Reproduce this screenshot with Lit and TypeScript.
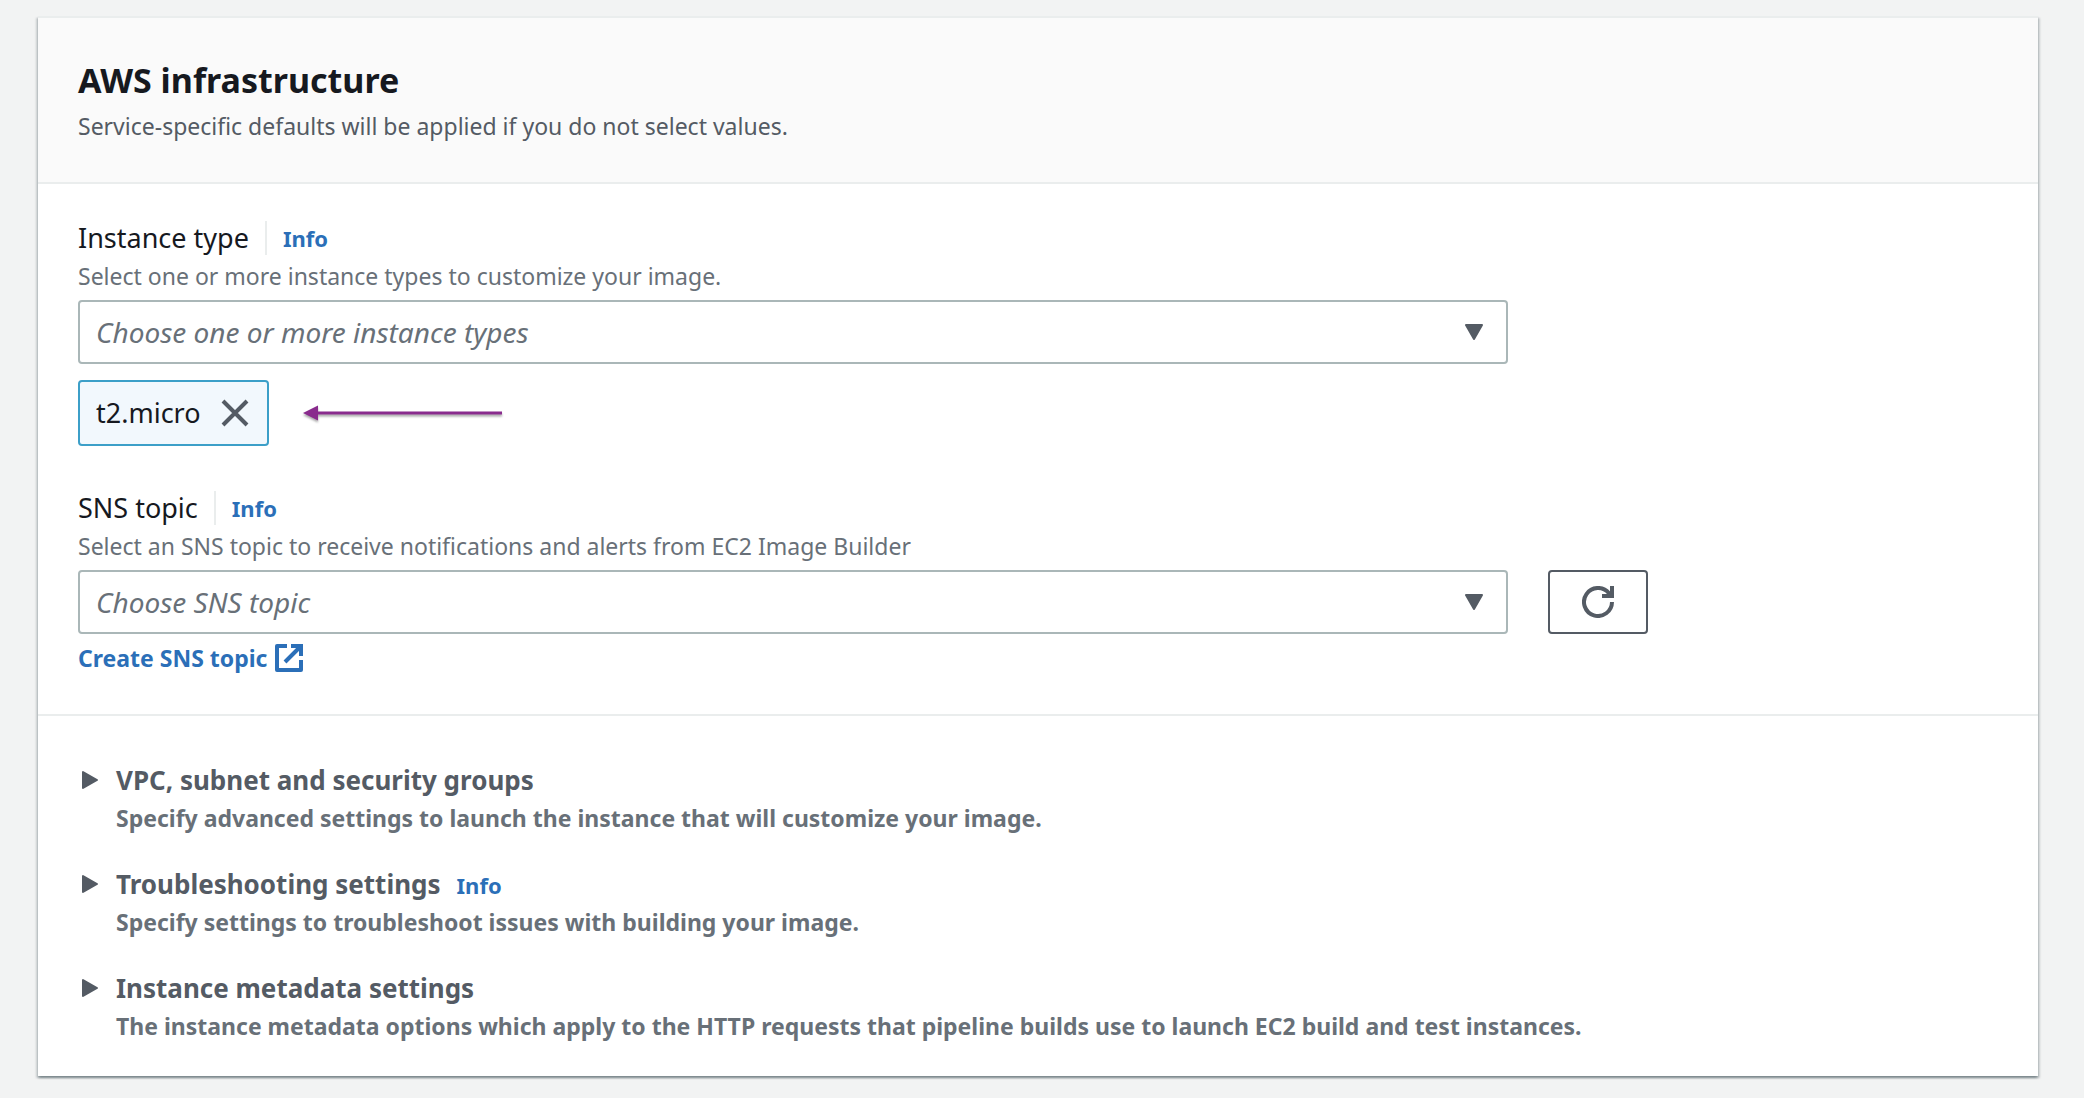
import { LitElement, html, css, svg, nothing } from "lit";
import { customElement, property, state } from "lit/decorators.js";

interface Section {
  title: string;
  description: string;
  info?: boolean;
}

const SECTIONS: Section[] = [
  {
    title: "VPC, subnet and security groups",
    description: "Specify advanced settings to launch the instance that will customize your image.",
  },
  {
    title: "Troubleshooting settings",
    description: "Specify settings to troubleshoot issues with building your image.",
    info: true,
  },
  {
    title: "Instance metadata settings",
    description:
      "The instance metadata options which apply to the HTTP requests that pipeline builds use to launch EC2 build and test instances.",
  },
];

const caretDown = svg`<path d="M2 1h16L10 15z" fill="currentColor" stroke="currentColor" stroke-width="2" stroke-linejoin="round"/>`;
const closeLines = svg`<path d="M2 2l24 24M26 2L2 26"/>`;
const refreshLines = svg`<path d="M30 16a14 14 0 1 1-3-8.700l1 1.700"/><path d="M20 10h10V0"/>`;

@customElement("form-select")
export class FormSelect extends LitElement {
  @property() label = "";
  @property() hint = "";
  @property() placeholder = "";

  static styles = css`
    :host { display: block; min-width: 0; }
    .heading { display: flex; align-items: center; height: 36px; }
    .label { font-size: 27px; line-height: 36px; color: #16191f; }
    .info {
      margin-left: 16px; padding-left: 16px; border-left: 2px solid #eaeded;
      font-size: 22px; line-height: 34px; font-weight: 700; color: #2b6fb8; text-decoration: none;
    }
    .hint { margin: 0 0 4px; font-size: 23px; line-height: 40px; color: #687078; }
    .control { display: grid; align-items: center; }
    .select, .caret { grid-area: 1 / 1; }
    .select {
      appearance: none; box-sizing: border-box; width: 100%; height: 64px; margin: 0;
      padding: 0 60px 0 16px; border: 2px solid #aab7b8; border-radius: 4px; background: #fff;
      font-family: inherit; font-size: 28px; font-style: italic; color: #687078;
    }
    .caret { justify-self: end; margin-right: 24px; width: 20px; height: 16px; color: #545b64; pointer-events: none; }
  `;

  render() {
    return html`
      <div class="heading">
        <label class="label" for="control">${this.label}</label>
        <a class="info" href="#info">Info</a>
      </div>
      <p class="hint" id="hint">${this.hint}</p>
      <div class="control">
        <select class="select" id="control" aria-describedby="hint">
          <option>${this.placeholder}</option>
        </select>
        <svg class="caret" viewBox="0 0 20 16" aria-hidden="true">${caretDown}</svg>
      </div>
    `;
  }
}

@customElement("app-root")
export class AppRoot extends LitElement {
  @state() private types = ["t2.micro"];

  static styles = css`
    :host {
      display: block; box-sizing: border-box; min-height: 100vh; padding: 16px 46px 22px 38px;
      background: #f2f3f3; color: #16191f; font-family: "Noto Sans", "Open Sans", sans-serif;
    }
    .card {
      border-top: 2px solid #eaeded; background: #fff;
      box-shadow: 0 2px 2px rgba(0, 28, 36, 0.3), 2px 2px 2px rgba(0, 28, 36, 0.15), -2px 2px 2px rgba(0, 28, 36, 0.15);
    }
    .header { padding: 40px 40px 36px; border-bottom: 2px solid #eaeded; background: #fafafa; }
    .title { margin: 0 0 4px; font-size: 34px; line-height: 44px; font-weight: 700; }
    .subtitle { margin: 0; font-size: 23px; line-height: 40px; color: #545b64; }
    .fields { display: flex; flex-direction: column; gap: 44px; padding: 36px 40px; border-bottom: 2px solid #eaeded; }
    .row { display: grid; grid-template-columns: calc(75% - 10px) auto; justify-content: start; align-items: end; column-gap: 40px; }
    .tokens { display: flex; align-items: center; gap: 34px; margin-top: 16px; }
    .token {
      display: flex; align-items: center; gap: 20px; box-sizing: border-box; height: 66px; padding: 0 18px 0 16px;
      border: 2px solid #3c9fc8; border-radius: 4px; background: #f2f8fd; font-size: 27px; line-height: 36px;
    }
    .remove { display: flex; padding: 0; border: 0; background: none; color: #545b64; cursor: pointer; }
    .icon { display: block; fill: none; stroke: currentColor; stroke-width: 4; }
    .close { width: 28px; height: 28px; }
    .arrow { display: block; width: 200px; height: 24px; color: #892b8d; filter: drop-shadow(0 2px 1px rgba(0, 0, 0, 0.35)); }
    .refresh {
      display: flex; align-items: center; justify-content: center; box-sizing: border-box; width: 100px; height: 64px;
      padding: 0; border: 2px solid #545b64; border-radius: 4px; background: #fff; color: #545b64; cursor: pointer;
    }
    .reload { width: 32px; height: 32px; }
    .create {
      display: inline-flex; align-items: center; gap: 8px; margin-top: 4px;
      font-size: 23px; line-height: 40px; font-weight: 700; color: #2b6fb8; text-decoration: none;
    }
    .external { width: 28px; height: 28px; }
    .sections { display: flex; flex-direction: column; gap: 28px; padding: 46px 40px 30px; }
    .summary { display: grid; grid-template-columns: 38px 1fr; list-style: none; font-weight: 700; cursor: pointer; }
    .marker { align-self: center; margin-left: 4px; width: 16px; height: 20px; color: #545b64; }
    .section[open] .marker { transform: rotate(90deg); }
    .line { display: flex; align-items: baseline; gap: 16px; height: 36px; }
    .name { margin: 0; font-size: 26px; line-height: 36px; font-weight: 700; color: #545b64; }
    .info { font-size: 22px; line-height: 36px; color: #2b6fb8; text-decoration: none; }
    .detail { grid-column: 2; font-size: 23px; line-height: 40px; color: #687078; }
  `;

  private remove(type: string) {
    this.types = this.types.filter((t) => t !== type);
  }

  render() {
    return html`
      <section class="card">
        <header class="header">
          <h1 class="title">AWS infrastructure</h1>
          <p class="subtitle">Service-specific defaults will be applied if you do not select values.</p>
        </header>
        <div class="fields">
          <div>
            <div class="row">
              <form-select
                label="Instance type"
                hint="Select one or more instance types to customize your image."
                placeholder="Choose one or more instance types"
              ></form-select>
            </div>
            <div class="tokens">
              ${this.types.map(
                (type) => html`
                  <span class="token">
                    ${type}
                    <button class="remove" type="button" aria-label="Remove ${type}" @click=${() => this.remove(type)}>
                      <svg class="icon close" viewBox="0 0 28 28" aria-hidden="true">${closeLines}</svg>
                    </button>
                  </span>
                `,
              )}
              <svg class="arrow" viewBox="0 0 200 24" aria-hidden="true">
                <path d="M0 12L15 4.500v15z" fill="currentColor" />
                <path d="M14 10.500h185v3H14z" fill="currentColor" />
              </svg>
            </div>
          </div>
          <div>
            <div class="row">
              <form-select
                label="SNS topic"
                hint="Select an SNS topic to receive notifications and alerts from EC2 Image Builder"
                placeholder="Choose SNS topic"
              ></form-select>
              <button class="refresh" type="button" aria-label="Refresh SNS topics">
                <svg class="icon reload" viewBox="0 0 32 32" aria-hidden="true">${refreshLines}</svg>
              </button>
            </div>
            <a class="create" href="#create-topic">
              Create SNS topic
              <svg class="icon external" viewBox="0 0 28 28" aria-hidden="true">
                <path d="M12 2H2v24h24V16" stroke-linejoin="round" />
                <path d="M16 2h10v10M26 2L10 18" />
              </svg>
            </a>
          </div>
        </div>
        <div class="sections">
          ${SECTIONS.map(
            (s) => html`
              <details class="section">
                <summary class="summary">
                  <svg class="marker" viewBox="0 0 16 20" aria-hidden="true">
                    <path
                      d="M1 2v16L15 10z"
                      fill="currentColor"
                      stroke="currentColor"
                      stroke-width="2"
                      stroke-linejoin="round"
                    />
                  </svg>
                  <span class="line">
                    <h2 class="name">${s.title}</h2>
                    ${s.info ? html`<a class="info" href="#info">Info</a>` : nothing}
                  </span>
                  <span class="detail">${s.description}</span>
                </summary>
              </details>
            `,
          )}
        </div>
      </section>
    `;
  }
}
